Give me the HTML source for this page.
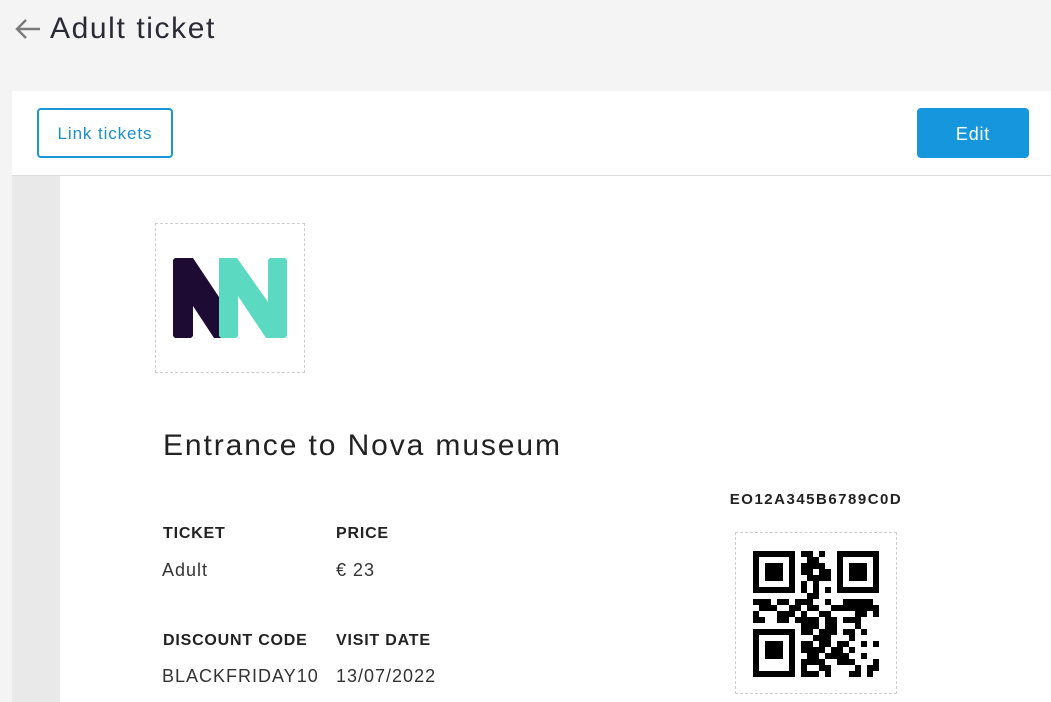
<!DOCTYPE html>
<html><head><meta charset="utf-8"><style>
body{margin:0;width:1051px;height:702px;overflow:hidden;background:#f4f4f4;font-family:"Liberation Sans",sans-serif;position:relative;color:#222}
.a{position:absolute}
.title{left:50px;top:12px;font-size:30px;color:#2a2a35;letter-spacing:1.6px}
.card{left:12px;top:91px;width:1039px;height:84px;background:#fff;border-bottom:1px solid #ddd}
.btn1{left:37px;top:108px;width:132px;height:46px;border:2px solid #1a96d6;border-radius:4px;color:#1a8fd0;font-size:17px;line-height:48px;text-align:center;background:#fff;letter-spacing:0.9px}
.btn2{left:917px;top:108px;width:112px;height:50px;background:#1696dc;border-radius:4px;color:#fff;font-size:18px;line-height:52px;text-align:center;letter-spacing:0.8px}
.gray{left:12px;top:176px;width:48px;height:526px;background:#e9e9e9}
.tk{left:60px;top:176px;width:991px;height:526px;background:#fff}
.lab{font-size:16px;font-weight:bold;color:#222;letter-spacing:0.8px}
.val{font-size:18px;color:#333;letter-spacing:1px}
</style></head><body>
<svg class="a" style="left:14px;top:17px" width="28" height="24" viewBox="0 0 28 24"><path d="M12 3 L3 12 L12 21 M3 12 H26" stroke="#7a7a7a" stroke-width="2.4" fill="none"/></svg>
<div class="a title">Adult ticket</div>
<div class="a card"></div>
<div class="a btn1">Link tickets</div>
<div class="a btn2">Edit</div>
<div class="a gray"></div>
<div class="a tk"></div>
<div class="a" style="left:155px;top:223px;width:148px;height:148px;border:1px dashed #ccc"></div>
<svg class="a" style="left:0;top:0" width="400" height="400">
<polygon points="173,260 175,258 193,258 221,300 221,338 214,338 193,306 193,336 191,338 175,338 173,336" fill="#1d0b33"/>
<polygon points="219,258 237,258 268,302 268,260 270,258 285,258 287,260 287,336 285,338 266,338 238,296 238,336 236,338 221,338 219,336" fill="#5cd9c1"/>
</svg>
<div class="a" style="left:163px;top:429px;font-size:30px;color:#222;letter-spacing:1.9px">Entrance to Nova museum</div>
<div class="a lab" style="left:163px;top:525px">TICKET</div>
<div class="a lab" style="left:336px;top:525px">PRICE</div>
<div class="a val" style="left:162px;top:560px">Adult</div>
<div class="a val" style="left:336px;top:560px">€ 23</div>
<div class="a lab" style="left:163px;top:632px">DISCOUNT CODE</div>
<div class="a lab" style="left:336px;top:632px">VISIT DATE</div>
<div class="a val" style="left:162px;top:666px">BLACKFRIDAY10</div>
<div class="a val" style="left:336px;top:666px">13/07/2022</div>
<div class="a" style="left:706px;top:491px;width:220px;text-align:center;font-size:15px;font-weight:bold;letter-spacing:1.5px">EO12A345B6789C0D</div>
<div class="a" style="left:735px;top:532px;width:160px;height:160px;border:1px dashed #ccc"></div>
<svg class="a" id="qr" style="left:753px;top:551px" width="126" height="126" viewBox="0 0 21 21" shape-rendering="crispEdges"></svg>
<script>
var r=["111111101101001111111","100000100110001000001","101110101111001011101","101110101101101011101","101110100111101011101","100000101010001000001","111111101010101111111","000000000110000000000","111011011100100111110","011100110110011111111","100011101001100001101","110011011110110111000","000000001110110001000","111111101101110110100","100000100011100010000","101110101101101100101","101110101111011010000","101110100110111100100","100000101111001110001","100000101001100001011","111111101110100011010"];
var s="";for(var y=0;y<21;y++)for(var x=0;x<21;x++)if(r[y][x]=="1")s+='<rect x="'+x+'" y="'+y+'" width="1" height="1"/>';
document.getElementById("qr").innerHTML=s;
</script>
</body></html>
